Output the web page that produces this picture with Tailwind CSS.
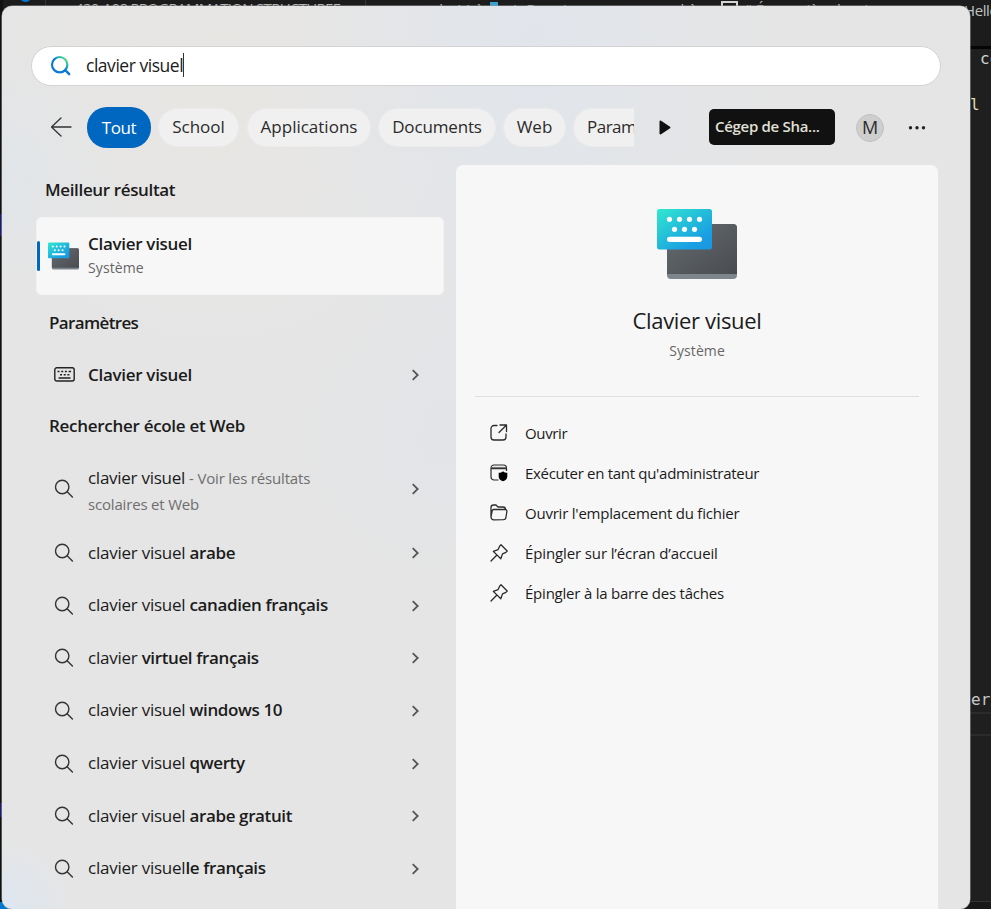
<!DOCTYPE html>
<html lang="fr">
<head>
<meta charset="utf-8">
<title>Recherche</title>
<script src="https://cdn.jsdelivr.net/npm/@tailwindcss/browser@4"></script>
</head>
<body class="relative h-[909px] w-[991px] overflow-hidden bg-[#1f1f1f] font-['Open_Sans','Noto_Sans',sans-serif] whitespace-nowrap text-[#1b1b1b]">
<svg class="absolute size-0">
  <defs>
    <linearGradient id="gk" x1="0" y1="0" x2="1" y2="1"><stop offset="0" stop-color="#666c72"/><stop offset="1" stop-color="#494c4f"/></linearGradient>
    <linearGradient id="gb" x1="0" y1="0" x2=".9" y2="1"><stop offset="0" stop-color="#30e8cf"/><stop offset=".8" stop-color="#1a9fe2"/><stop offset="1" stop-color="#1997e0"/></linearGradient>
  </defs>
  <symbol id="search" viewBox="0 0 20 20"><g fill="none" stroke="#333" stroke-width="1.400" stroke-linecap="round"><circle cx="8.200" cy="8" r="6.700"/><path d="M13.100 12.800 18.400 18"/></g></symbol>
  <symbol id="chev" viewBox="0 0 10 14"><path d="M2.700 2.200 7.700 7 2.700 11.800" fill="none" stroke="#555" stroke-width="1.800"/></symbol>
  <symbol id="pin" viewBox="0 0 20 20"><path d="M12 1.800 18.200 8 16.900 9.400 13.500 10.900 11.800 15.800 4.300 8.400 9.100 6.600 10.600 3.200ZM7.700 12.200 2 18" fill="none" stroke="#2b2b2b" stroke-width="1.300" stroke-linejoin="round" stroke-linecap="round"/></symbol>
  <symbol id="osk" viewBox="0 0 80 70">
    <rect x="10" y="15" width="70" height="55" rx="4" fill="#7d858d"/>
    <path d="M10 19a4 4 0 0 1 4-4H76a4 4 0 0 1 4 4V65H10Z" fill="url(#gk)"/>
    <rect width="55" height="40.500" rx="2.500" fill="url(#gb)"/>
    <g fill="#fff"><circle cx="12.500" cy="10.300" r="2.600"/><circle cx="22.500" cy="10.300" r="2.600"/><circle cx="32.500" cy="10.300" r="2.600"/><circle cx="42.500" cy="10.300" r="2.600"/><circle cx="17.500" cy="20.300" r="2.600"/><circle cx="27.500" cy="20.300" r="2.600"/><circle cx="37.500" cy="20.300" r="2.600"/><rect x="10" y="27.700" width="35" height="5.200" rx="2.600"/></g>
  </symbol>
</svg>

<!-- editor behind the search window -->
<div class="absolute inset-x-0 top-0 h-[47px] bg-[#1c1c1c]"></div>
<div class="absolute left-0 top-0 h-[20px] w-[960px] text-[15px] leading-[16px] text-[#b5b5b5]">
  <div class="absolute left-[19px] top-[-11px] size-[13px] rounded-full bg-[#0078d4]"></div>
  <div class="absolute left-[45px] top-0 h-[7px] w-px bg-[#333]"></div>
  <div class="absolute left-[365px] top-0 h-[7px] w-px bg-[#333]"></div>
  <span class="absolute left-[75px] top-0 tracking-[-0.7px]">420-A08 PROGRAMMATION STRUCTUREE</span>
  <span class="absolute left-[393px] top-[1px] tracking-[-0.3px]">exemple A1 à</span>
  <span class="absolute left-[490px] top-[2px] h-[5px] w-[8px] bg-[#3aa0d0]"></span>
  <span class="absolute left-[513px] top-[1px] tracking-[0.5px]">J. Dernier commencez l à</span>
  <span class="absolute left-[721px] top-[1px] h-[10px] w-[17px] border-2 border-[#d4d4d4]"></span>
  <span class="absolute left-[746px] top-[1px]">" Écran vière bonjour comme</span>
</div>
<div class="absolute left-[964px] top-[-1px] text-[15px] leading-[23px] tracking-[-0.4px] text-[#c2c2c2]">Hello</div>
<div class="absolute left-[968px] top-[46px] h-[3px] w-[23px] bg-[#050505]"></div>
<div class="absolute left-[980px] top-[48px] font-['DejaVu_Sans_Mono',monospace] text-[16px] leading-[22px] text-[#d4d4d4]">co</div>
<div class="absolute left-[970px] top-[94px] font-['DejaVu_Sans_Mono',monospace] text-[16px] leading-[22px] text-[#e0dcb4]">l</div>
<div class="absolute left-[971px] top-[690px] font-['DejaVu_Sans_Mono',monospace] text-[16px] leading-[20px] text-[#c8c8c8]">er</div>
<div class="absolute left-[968px] top-[712px] h-[24px] w-[23px] border-y-2 border-[#2b2b2b]"></div>
<div class="absolute left-[960px] top-[901px] h-[8px] w-[31px] border-t border-[#333] bg-[#181818]"></div>
<div class="absolute left-0 top-0 h-[902px] w-[3px] bg-[#111]"></div>
<div class="absolute left-0 top-[214px] h-[22px] w-[2px] bg-[#1c1c70]"></div>
<div class="absolute left-0 top-[803px] h-[14px] w-[2px] bg-[#1c1c70]"></div>
<div class="absolute left-0 top-[902px] h-[7px] w-[10px] bg-[#0078d4]"></div>

<!-- search window -->
<main class="absolute left-[2px] top-[6px] flex h-[903px] w-[968px] flex-col rounded-[10px] bg-[#e5e5e5] bg-[radial-gradient(circle_at_0%_100%,#dde6f1_0,transparent_70px),radial-gradient(ellipse_at_55%_4%,#e1e5eb_0,transparent_260px),radial-gradient(ellipse_at_46%_48%,#e2e4e8_0,transparent_170px),radial-gradient(ellipse_at_22%_10%,#e8e6e3_0,transparent_240px),radial-gradient(ellipse_at_0%_18%,#e0e5ea_0,transparent_150px)] shadow-[0_0_0_0.5px_#999]">
  <div class="ml-[29px] mt-[40px] flex h-[40px] w-[910px] shrink-0 items-center rounded-full border border-[#d3d3d3] bg-white pl-[18px]">
    <svg class="size-[22px]" viewBox="0 0 22 22"><linearGradient id="gs" x1=".2" y1=".8" x2=".9" y2=".1"><stop offset=".45" stop-color="#0a78d6"/><stop offset=".75" stop-color="#22b5b5"/><stop offset="1" stop-color="#5fdf7d"/></linearGradient><circle cx="9.700" cy="9.700" r="7.700" fill="none" stroke="url(#gs)" stroke-width="2.200"/><path d="m15.200 15.200 4 4" stroke="#0a78d6" stroke-width="2.400" stroke-linecap="round"/></svg>
    <span class="relative -top-px ml-[14px] text-[17.5px] tracking-[-0.47px]">clavier visuel</span><span class="relative -top-px h-[24px] w-px bg-[#333]"></span>
  </div>

  <div class="mt-[21px] flex h-[41px] shrink-0 items-center text-[17px] text-[#2b2b2b]">
    <svg class="ml-[48px] size-[22px]" viewBox="0 0 22 22" fill="none" stroke="#333" stroke-width="1.300" stroke-linecap="round" stroke-linejoin="round"><path d="M21 10H1.500M11 1l-9.500 9 9.500 9"/></svg>
    <div class="ml-[15px] flex w-[547px] items-center gap-[8px] overflow-hidden">
      <div class="flex h-[41px] w-[64px] shrink-0 items-center justify-center rounded-[20px] bg-[#0067c0] tracking-[-0.4px] text-white">Tout</div>
      <div class="-ml-px flex h-[39px] w-[81px] shrink-0 items-center justify-center rounded-full border border-[#ebebeb] bg-[#f0f0f0] pb-px">School</div>
      <div class="flex h-[39px] w-[124px] shrink-0 items-center justify-center rounded-full border border-[#ebebeb] bg-[#f0f0f0] pb-px">Applications</div>
      <div class="-ml-px flex h-[39px] w-[118px] shrink-0 items-center justify-center rounded-full border border-[#ebebeb] bg-[#f0f0f0] pb-px tracking-[-0.15px]">Documents</div>
      <div class="-ml-px flex h-[39px] w-[63px] shrink-0 items-center justify-center rounded-full border border-[#ebebeb] bg-[#f0f0f0] pb-px">Web</div>
      <div class="-ml-px flex h-[39px] w-[116px] shrink-0 items-center rounded-full border border-[#ebebeb] bg-[#f0f0f0] pb-px pl-[13px] tracking-[-0.5px]">Paramètres</div>
    </div>
    <svg class="ml-[25px] h-[16px] w-[12px]" viewBox="0 0 12 16"><path d="M1.500 1.500 10.500 7.500 1.500 13.500Z" fill="#111" stroke="#111" stroke-width="2" stroke-linejoin="round"/></svg>
    <div class="relative -top-px ml-[38px] flex h-[36px] w-[126px] items-center rounded-[5px] bg-[#111] pl-[6px] text-[15px] font-semibold tracking-[-0.3px] text-[#e0e0d8]">Cégep de Sha...</div>
    <div class="ml-[21px] flex size-[28px] items-center justify-center rounded-full border border-[#c2c2c2] bg-[#cecece] text-[18px]">M</div>
    <svg class="ml-[24px] h-[6px] w-[18px]" viewBox="0 0 18 6" fill="#222"><circle cx="2.500" cy="2.700" r="1.700"/><circle cx="9" cy="2.700" r="1.700"/><circle cx="15.500" cy="2.700" r="1.700"/></svg>
  </div>

  <div class="mt-[17px] flex min-h-0 flex-1 overflow-hidden">
    <section class="flex w-[454px] shrink-0 flex-col pl-[34px] text-[17px]">
      <h2 class="ml-[9px] mt-[12px] h-[26px] text-[17px] leading-[26px] font-semibold tracking-[-0.36px]">Meilleur résultat</h2>
      <div class="mt-[14px] flex h-[78px] w-[408px] shrink-0 items-center rounded-[5px] border border-[#f1f1f1] bg-[#f7f7f7]">
        <div class="h-[30px] w-[3px] rounded-full bg-[#0067c0]"></div>
        <svg class="ml-[8px] h-[28px] w-[31px]"><use href="#osk"/></svg>
        <div class="ml-[9px] flex flex-col pb-[2px]">
          <span class="leading-[25px] font-semibold tracking-[-0.3px]">Clavier visuel</span>
          <span class="text-[14px] leading-[24px] tracking-[0.1px] text-[#666]">Système</span>
        </div>
      </div>
      <h2 class="ml-[13px] mt-[14px] h-[28px] leading-[28px] font-semibold tracking-[-0.65px]">Paramètres</h2>
      <div class="mt-[12px] flex h-[52px] w-[408px] items-center pl-[18px] pr-[24px]">
        <svg class="relative -top-px h-[15px] w-[21px]" viewBox="0 0 21 15"><rect x=".8" y=".8" width="19.400" height="13.200" rx="2" fill="none" stroke="#222" stroke-width="1.400"/><path d="M3.500 4.500h2m1.700 0h2m1.700 0h2m1.700 0h2.500M6 7.800h2m1.700 0h2m1.700 0h2M4.500 11h12" stroke="#222" stroke-width="1.500"/></svg>
        <span class="ml-[13px] font-semibold tracking-[-0.3px]">Clavier visuel</span>
        <svg class="ml-auto h-[14px] w-[10px]"><use href="#chev"/></svg>
      </div>
      <h2 class="ml-[13px] mt-[11px] h-[28px] leading-[28px] font-semibold tracking-[-0.29px]">Rechercher école et Web</h2>
      <div class="mt-[11px] flex h-[76px] w-[408px] items-center pl-[18px] pr-[24px]">
        <svg class="size-[20px]"><use href="#search"/></svg>
        <div class="ml-[14px] pt-[3px] leading-[25px] tracking-[-0.27px]">clavier visuel <span class="text-[15px] tracking-[-0.18px] text-[#6e6e6e]">- Voir les résultats<br>scolaires et Web</span></div>
        <svg class="ml-auto h-[14px] w-[10px]"><use href="#chev"/></svg>
      </div>
      <div id="suggestions" class="flex flex-col tracking-[-0.24px]">
        <template><div class="flex h-[52.6px] w-[408px] items-center pl-[18px] pr-[24px]">
          <svg class="size-[20px]"><use href="#search"/></svg>
          <span class="ml-[14px] pb-[2px]"><span></span><b class="font-semibold tracking-[-0.38px]"></b></span>
          <svg class="ml-auto h-[14px] w-[10px]"><use href="#chev"/></svg>
        </div></template>
      </div>
    </section>

    <section class="flex w-[482px] shrink-0 flex-col items-center rounded-t-[7px] bg-[#f7f7f7]">
      <svg class="mt-[44px] h-[70px] w-[80px] shrink-0"><use href="#osk"/></svg>
      <div class="mt-[25px] text-[22px] leading-[32px] tracking-[-0.35px]">Clavier visuel</div>
      <div class="mt-[4px] text-[14px] leading-[22px] tracking-[0.1px] text-[#666]">Système</div>
      <div class="mt-[34px] h-px w-[444px] bg-[#dfdfdf]"></div>
      <div class="mt-[16px] flex w-full flex-col pl-[33px] text-[15px]">
        <div class="flex h-[40px] items-center gap-[16px]"><svg class="size-[20px]" viewBox="0 0 20 20" fill="none" stroke="#2b2b2b" stroke-width="1.300" stroke-linecap="round" stroke-linejoin="round"><path d="M8 2.500H5A3 3 0 0 0 2 5.500V14a3 3 0 0 0 3 3h9a3 3 0 0 0 3-3v-3M11 2h6.500v6.500M17.300 2.200 10 9.500"/></svg><span class="tracking-[-0.35px]">Ouvrir</span></div>
        <div class="flex h-[40px] items-center gap-[16px]"><svg class="size-[20px]" viewBox="0 0 20 20" fill="none" stroke="#2b2b2b" stroke-width="1.200"><path d="M9.500 17H5a3 3 0 0 1-3-3V5a3 3 0 0 1 3-3h9.500a3 3 0 0 1 3 3v3M2 5.700h15.500"/><path d="M2.500 4.500h14.500" stroke="#777"/><path d="M14 8.200c1.200 1 2.600 1.500 4.300 1.500v3.800c0 2.300-1.600 3.900-4.300 4.800-2.700-.9-4.300-2.500-4.300-4.800V9.700c1.700 0 3.100-.5 4.300-1.500Z" fill="#000" stroke="none"/></svg><span class="tracking-[-0.3px]">Exécuter en tant qu'administrateur</span></div>
        <div class="flex h-[40px] items-center gap-[16px]"><svg class="size-[20px]" viewBox="0 0 20 20" fill="none" stroke="#2b2b2b" stroke-width="1.300" stroke-linejoin="round"><path d="M2 14V4.500a2.500 2.500 0 0 1 2.500-2.500H7l2 2h5a2.500 2.500 0 0 1 2.500 2.500M4.800 16.800A2.700 2.700 0 0 1 2 14l1.200-6.300a1.500 1.500 0 0 1 1.500-1.200H16.200a1.700 1.700 0 0 1 1.700 2l-1 6a2.500 2.500 0 0 1-2.400 2.200Z"/></svg><span class="tracking-[-0.22px]">Ouvrir l'emplacement du fichier</span></div>
        <div class="flex h-[40px] items-center gap-[16px]"><svg class="size-[20px]"><use href="#pin"/></svg><span class="tracking-[-0.12px]">Épingler sur l’écran d’accueil</span></div>
        <div class="flex h-[40px] items-center gap-[16px]"><svg class="size-[20px]"><use href="#pin"/></svg><span class="tracking-[-0.22px]">Épingler à la barre des tâches</span></div>
      </div>
    </section>
  </div>
</main>
<script>
const list = document.getElementById('suggestions');
const tpl = list.querySelector('template');
[['clavier visuel ', 'arabe'], ['clavier visuel ', 'canadien français'], ['clavier ', 'virtuel français'], ['clavier visuel ', 'windows 10'], ['clavier visuel ', 'qwerty'], ['clavier visuel ', 'arabe gratuit'], ['clavier visuel', 'le français']].forEach(([typed, rest]) => {
  const row = tpl.content.cloneNode(true);
  row.querySelector('span span').textContent = typed;
  row.querySelector('b').textContent = rest;
  list.append(row);
});
</script>
</body>
</html>
